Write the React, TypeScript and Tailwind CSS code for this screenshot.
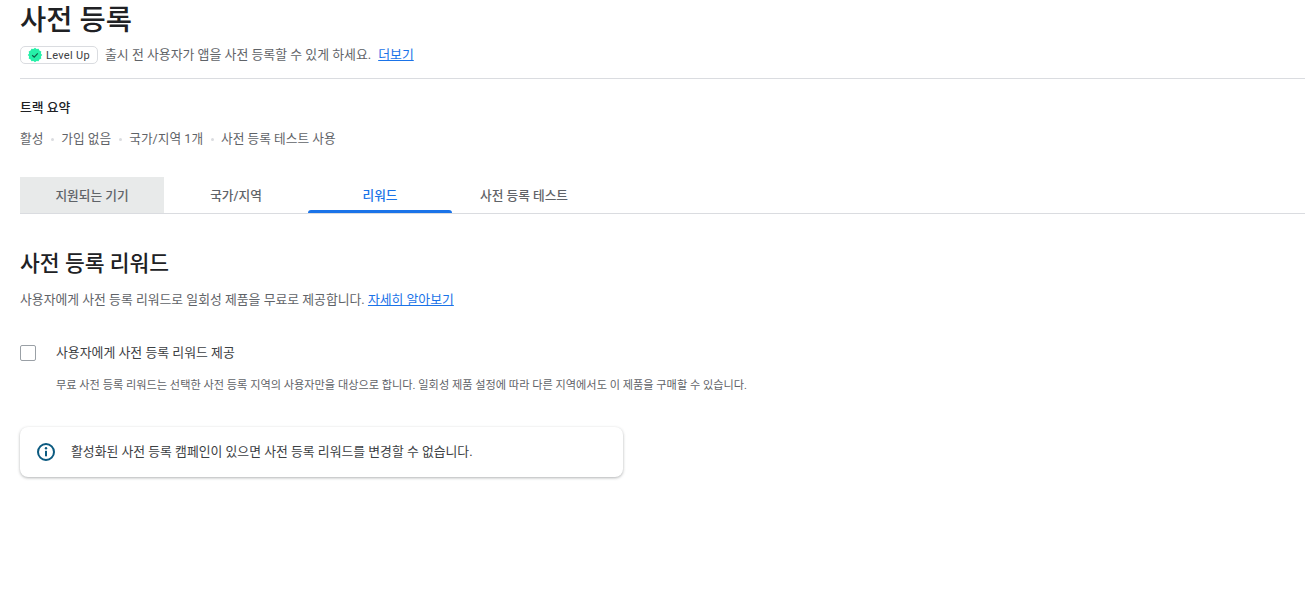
const fontStack = 'font-["Roboto","Noto_Sans_CJK_KR",sans-serif]';

const tabs = [
  { label: '지원되는 기기', hovered: true },
  { label: '국가/지역' },
  { label: '리워드', active: true },
  { label: '사전 등록 테스트' },
];

const summary = ['활성', '가입 없음', '국가/지역 1개', '사전 등록 테스트 사용'];

function LevelUpBadge() {
  return (
    <span className="flex h-[18px] w-[78px] items-center rounded-[5px] border border-[#dadce0] pl-[6px]">
      <svg width="16" height="16" viewBox="0 0 16 16">
        <path
          d="M8 .8l1.600 1.300 2-.4.8 1.900 1.900.8-.4 2L15.200 8l-1.300 1.600.4 2-1.900.8-.8 1.900-2-.4L8 15.200l-1.600-1.300-2 .4-.8-1.900-1.900-.8.4-2L.8 8l1.300-1.600-.4-2 1.900-.8.8-1.900 2 .4z"
          fill="#26f0a8"
        />
        <path d="M5.200 8.200l2 1.900 3.600-3.800" fill="none" stroke="#0d5c46" strokeWidth="1.200" />
      </svg>
      <span className="ml-[3px] text-[11px] leading-none tracking-[0.3px] text-[#3c4043]">Level Up</span>
    </span>
  );
}

export default function App() {
  return (
    <div className={`h-[612px] w-[1305px] overflow-hidden bg-white ${fontStack}`}>
      <div className="pl-5">
        <h1 className="h-[36px] text-[28.500px] leading-[42px] font-medium text-[#202124]">사전 등록</h1>
        <div className="mt-[10px] flex h-[18px] items-center text-[12.900px] text-[#5f6368]">
          <LevelUpBadge />
          <span className="ml-[7px]">출시 전 사용자가 앱을 사전 등록할 수 있게 하세요.</span>
          <a className="ml-[7px] text-[#1a73e8] underline">더보기</a>
        </div>
        <div className="mt-[14px] h-px bg-[#dadce0]" />

        <h2 className="mt-[21px] text-[12.800px] leading-[16px] font-medium text-[#202124]">트랙 요약</h2>
        <div className="mt-[15px] flex h-[16px] items-center text-[12.700px] text-[#5f6368]">
          {summary.map((item, i) => (
            <span key={item} className="flex items-center">
              {i > 0 && <span className="mx-[7.500px] h-[3px] w-[3px] rounded-full bg-[#dadce0]" />}
              {item}
            </span>
          ))}
        </div>

        <div className="mt-[30px] flex h-[37px] border-b border-[#dadce0]">
          {tabs.map((tab) => (
            <div
              key={tab.label}
              className={`relative flex h-[36px] w-[144px] items-center justify-center pt-px text-[12.700px] font-medium ${
                tab.hovered ? 'bg-[#e8eaea]' : ''
              } ${tab.active ? 'text-[#1a73e8]' : 'text-[#5f6368]'}`}
            >
              {tab.label}
              {tab.active && <span className="absolute right-0 bottom-0 left-0 h-[3px] rounded-t-[3px] bg-[#1a73e8]" />}
            </div>
          ))}
        </div>

        <h2 className="mt-[36px] text-[21.500px] leading-[28px] font-medium text-[#202124]">사전 등록 리워드</h2>
        <p className="mt-[13px] text-[12.850px] leading-[18px] text-[#5f6368]">
          사용자에게 사전 등록 리워드로 일회성 제품을 무료로 제공합니다.{' '}
          <a className="text-[#1a73e8] underline">자세히 알아보기</a>
        </p>

        <div className="mt-[35px] flex items-center">
          <span className="h-4 w-4 rounded-[2px] border border-[#9aa0a6]" />
          <span className="ml-5 text-[12.900px] leading-[18px] text-[#3c4043]">사용자에게 사전 등록 리워드 제공</span>
        </div>
        <p className="mt-[17px] ml-9 text-[11.180px] leading-[14px] text-[#5f6368]">
          무료 사전 등록 리워드는 선택한 사전 등록 지역의 사용자만을 대상으로 합니다. 일회성 제품 설정에 따라 다른 지역에서도 이 제품을 구매할 수 있습니다.
        </p>

        <div className="mt-[34px] flex h-[50px] w-[603px] items-center rounded-[8px] bg-white pl-4 shadow-[0_1px_3px_rgba(60,64,67,0.4)]">
          <svg width="20" height="20" viewBox="0 0 20 20" fill="none">
            <circle cx="10" cy="10" r="8" stroke="#0b5a80" strokeWidth="2" />
            <circle cx="10" cy="6.300" r="1.200" fill="#0b5a80" />
            <rect x="9" y="8.800" width="2" height="5.500" fill="#0b5a80" />
          </svg>
          <span className="ml-[15px] text-[12.850px] text-[#3c4043]">
            활성화된 사전 등록 캠페인이 있으면 사전 등록 리워드를 변경할 수 없습니다.
          </span>
        </div>
      </div>
    </div>
  );
}
